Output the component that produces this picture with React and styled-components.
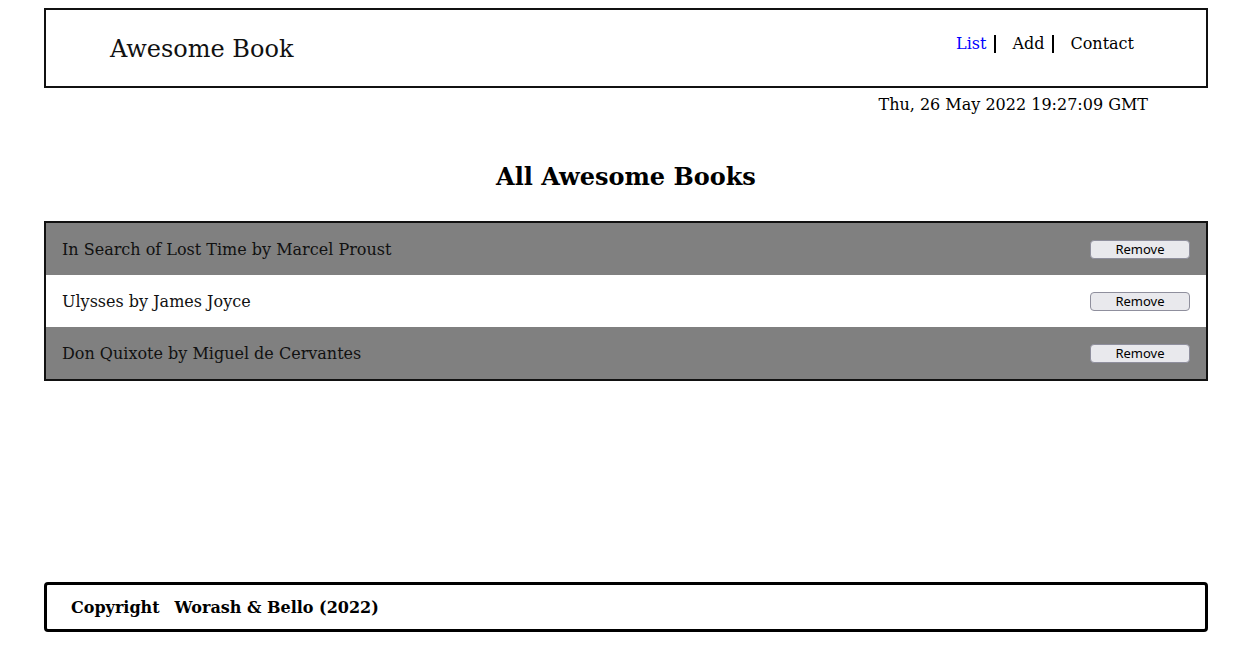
import React from 'react';
import styled, { createGlobalStyle } from 'styled-components';

const GlobalStyle = createGlobalStyle`
  * {
    box-sizing: border-box;
  }

  body {
    margin: 0;
    font-family: "DejaVu Serif", serif;
    font-size: 16px;
    color: #000;
    background: #fff;
  }
`;

const Page = styled.div`
  display: flex;
  flex-direction: column;
  width: 1164px;
  min-height: 100vh;
  margin-left: 44px;
  padding: 8px 0 14px;
`;

const Header = styled.header`
  display: flex;
  justify-content: space-between;
  align-items: center;
  height: 80px;
  padding: 0 64px;
  border: 2px solid #111;
`;

const Logo = styled.h1`
  margin: 2px 0 0;
  font-size: 24px;
  font-weight: 400;
  color: #111;
`;

const NavList = styled.ul`
  display: flex;
  gap: 8px;
  margin: 0 0 8px;
  padding: 0;
  list-style: none;
`;

const NavItem = styled.li`
  padding: 0 8px;
  line-height: 18px;
  border-right: ${({ last }) => (last ? 'none' : '2px solid #000')};
`;

const NavLink = styled.a`
  color: ${({ active }) => (active ? '#0000ff' : '#000')};
  text-decoration: none;
  cursor: pointer;
`;

const DateLine = styled.p`
  margin: 7px 0 0;
  padding-right: 60px;
  text-align: right;
`;

const Title = styled.h2`
  margin: 49px 0 30px;
  font-size: 24px;
  line-height: 28px;
  text-align: center;
`;

const BookList = styled.ul`
  margin: 0;
  padding: 0;
  list-style: none;
  border: 2px solid #111;
`;

const BookRow = styled.li`
  display: flex;
  justify-content: space-between;
  align-items: center;
  height: 52px;
  padding: 0 16px;
  background: ${({ shaded }) => (shaded ? '#808080' : '#fff')};
  color: #111;
`;

const RemoveButton = styled.button`
  width: 100px;
  height: 19px;
  padding: 0;
  font-family: "Noto Sans", "DejaVu Sans", sans-serif;
  font-size: 13px;
  line-height: 17px;
  color: #000;
  background: #e9e9ed;
  border: 1px solid #8f8f9d;
  border-radius: 4px;
  cursor: pointer;
`;

const Footer = styled.footer`
  display: flex;
  align-items: center;
  gap: 15px;
  height: 50px;
  margin-top: auto;
  padding: 0 24px;
  border: 3px solid #000;
  border-radius: 4px;
  font-weight: 700;
`;

const books = [
  { id: 1, title: 'In Search of Lost Time', author: 'Marcel Proust' },
  { id: 2, title: 'Ulysses', author: 'James Joyce' },
  { id: 3, title: 'Don Quixote', author: 'Miguel de Cervantes' },
];

const links = ['List', 'Add', 'Contact'];

const App = () => (
  <>
    <GlobalStyle />
    <Page>
      <Header>
        <Logo>Awesome Book</Logo>
        <nav>
          <NavList>
            {links.map((label, i) => (
              <NavItem key={label} last={i === links.length - 1}>
                <NavLink active={i === 0}>{label}</NavLink>
              </NavItem>
            ))}
          </NavList>
        </nav>
      </Header>
      <DateLine>Thu, 26 May 2022 19:27:09 GMT</DateLine>

      <Title>All Awesome Books</Title>
      <BookList>
        {books.map((book, i) => (
          <BookRow key={book.id} shaded={i % 2 === 0}>
            <span>{`${book.title} by ${book.author}`}</span>
            <RemoveButton type="button">Remove</RemoveButton>
          </BookRow>
        ))}
      </BookList>

      <Footer>
        <span>Copyright</span>
        <span>Worash &amp; Bello (2022)</span>
      </Footer>
    </Page>
  </>
);

export default App;
